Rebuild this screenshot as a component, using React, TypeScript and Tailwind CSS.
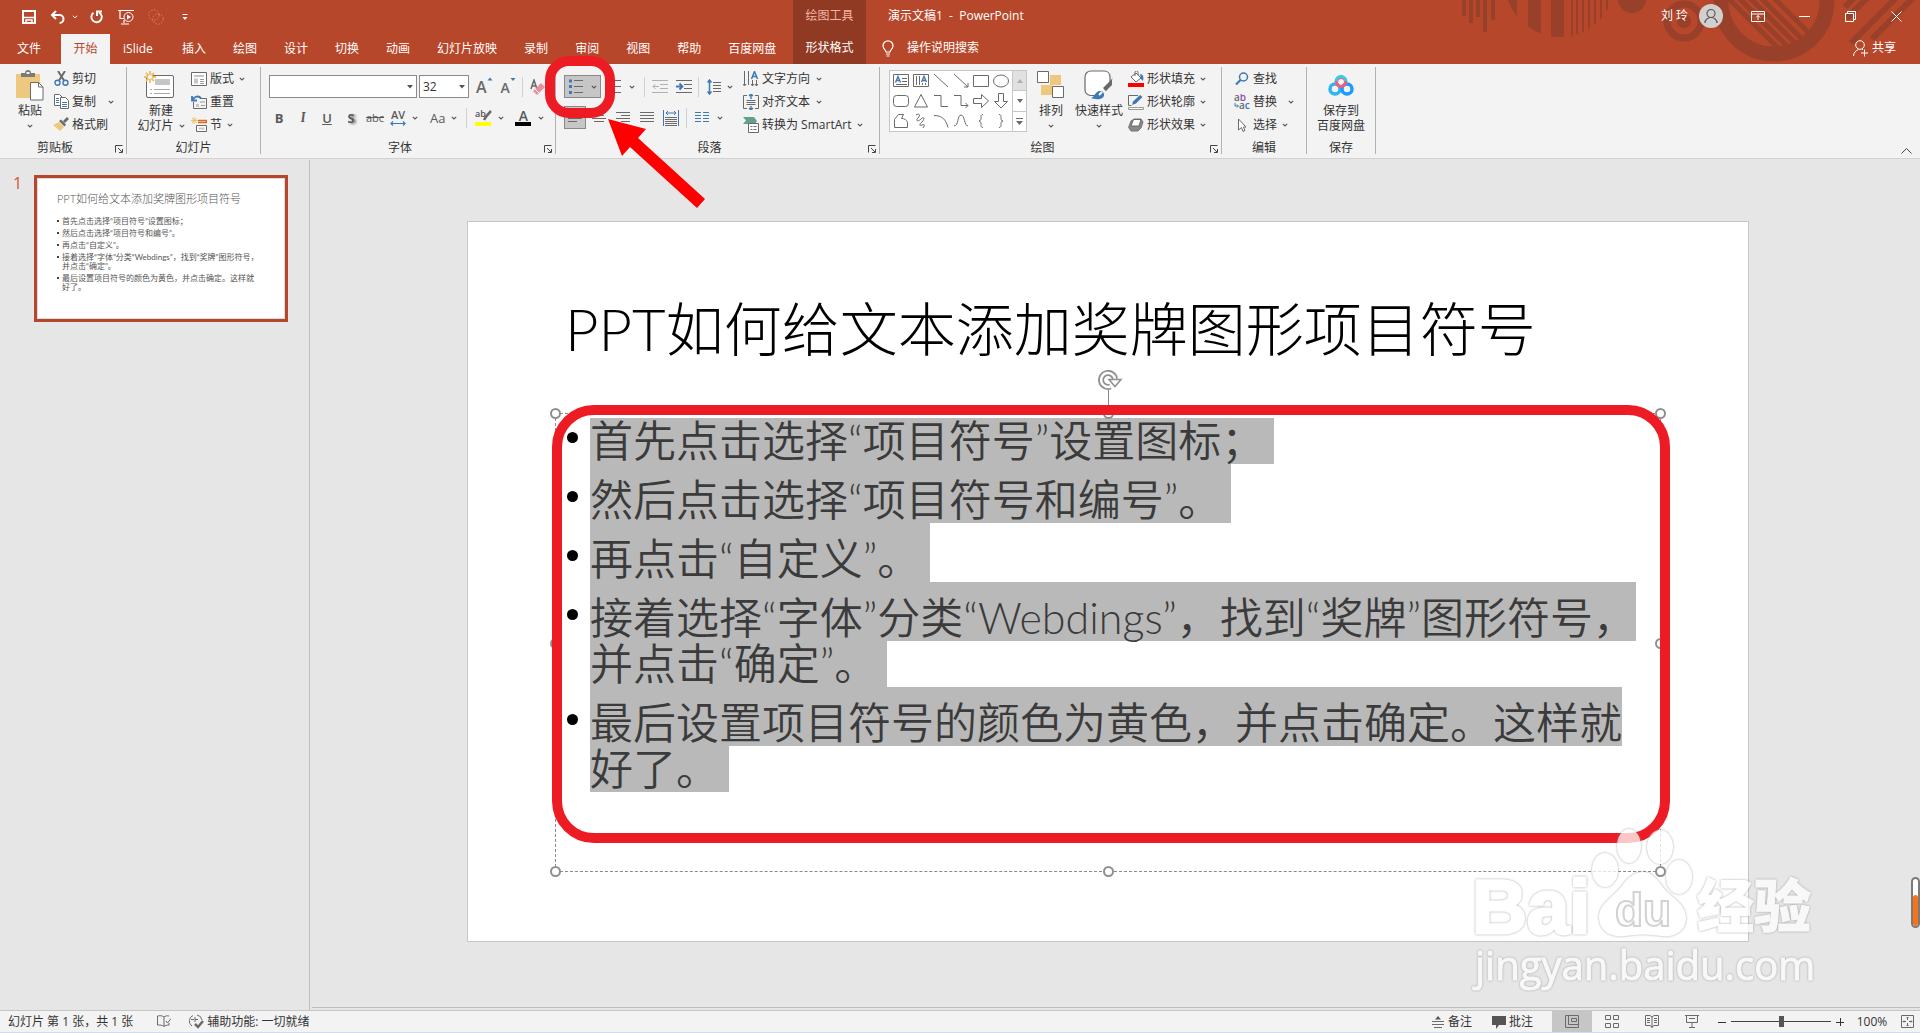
import React, { useState } from 'react';

const TABS = ['插入', '绘图', '设计', '切换', '动画', '幻灯片放映', '录制', '审阅', '视图', '帮助', '百度网盘'];

const TITLE = 'PPT如何给文本添加奖牌图形项目符号';

const PARAGRAPHS = [
    ['首先点击选择“项目符号”设置图标；'],
    ['然后点击选择“项目符号和编号”。'],
    ['再点击“自定义”。'],
    ['接着选择“字体”分类“Webdings”，找到“奖牌”图形符号，', '并点击“确定”。'],
    ['最后设置项目符号的颜色为黄色，并点击确定。这样就', '好了。'],
];

type IconProps = { w?: number; h?: number; children: React.ReactNode; className?: string };

function Icon({ w = 16, h = 16, children, className = '' }: IconProps) {
    return (
        <svg width={w} height={h} viewBox={`0 0 ${w} ${h}`} fill="none" stroke="#6a6a6a" className={`shrink-0 ${className}`} aria-hidden="true">
            {children}
        </svg>
    );
}

function Chevron({ className = '' }: { className?: string }) {
    return (
        <Icon w={6} h={4} className={className}>
            <path d="M.8.8 3 3 5.2.8" stroke="#555" strokeWidth="1.1" />
        </Icon>
    );
}

function Launcher() {
    return (
        <button aria-label="更多选项" className="absolute bottom-[1px] right-[3px] flex">
            <Icon w={8} h={8}>
                <path d="M.5 7.5V.5H7.5M3 3l4 4M7.5 4v3.5H4" stroke="#444" />
            </Icon>
        </button>
    );
}

function Group({ label, className, launcher, children }: { label: string; className: string; launcher?: boolean; children: React.ReactNode }) {
    return (
        <section aria-label={label} className={`relative flex shrink-0 flex-col border-r border-[#b1b1b1] ${className}`}>
            <div className="flex h-[71px] shrink-0">{children}</div>
            <div className={`shrink-0 text-center leading-5 ${launcher ? 'pr-4' : ''}`}>{label}</div>
            {launcher && <Launcher />}
        </section>
    );
}

function SmallButton({ icon, label, arrow, gap = 'gap-1' }: { icon: React.ReactNode; label: string; arrow?: boolean; gap?: string }) {
    return (
        <button className="flex h-[23px] items-center gap-[3px] whitespace-nowrap">
            <span className="flex w-4 shrink-0 justify-center">{icon}</span>
            <span className={`flex items-center ${gap}`}>
                {label}
                {arrow && <Chevron className="ml-[1px]" />}
            </span>
        </button>
    );
}

function BigButton({ icon, lines, arrow, inline, className = '' }: { icon: React.ReactNode; lines: string[]; arrow?: boolean; inline?: boolean; className?: string }) {
    return (
        <button className={`flex flex-col items-center whitespace-nowrap leading-[15px] ${className}`}>
            <span className="flex h-9 items-center justify-center">{icon}</span>
            {lines.map((l, i) => (
                <span key={l} className="flex items-center gap-[5px]">
                    {l}
                    {inline && i === lines.length - 1 && <Chevron />}
                </span>
            ))}
            {arrow && <Chevron className="mt-[6px]" />}
        </button>
    );
}

function Sep() {
    return <span className="h-5 w-px shrink-0 bg-[#d0d0d0]" />;
}

function Lines({ rows, w = 14 }: { rows: [number, number][]; w?: number }) {
    return (
        <Icon w={w} h={11}>
            {rows.map(([a, b], i) => (
                <path key={i} d={`M${a} ${i * 3 + 1 - 0.5}H${b}`} />
            ))}
        </Icon>
    );
}

function HeaderArt() {
    return (
        <svg width="470" height="64" viewBox="1450 0 470 64" className="absolute right-0 top-0" fill="#98402a" aria-hidden="true">
            <defs>
                <clipPath id="disc"><circle cx="1560" cy="-18" r="55" /></clipPath>
                <clipPath id="ring"><circle cx="1774" cy="1" r="48" /></clipPath>
            </defs>
            <path d="M1462 0h4v16h-4zM1469 0h4v23h-4zM1476 0h4v17h-4zM1483 0h4v32h-4zM1491 0h4v20h-4z" />
            <path clipPath="url(#disc)" d="M1505 0h12v40h-12zM1528 0h13v40h-13zM1551 0h13v40h-13zM1571 0h2v40h-2zM1576 0h2v40h-2zM1582 0h2v40h-2zM1588 0h2v40h-2zM1594 0h2v40h-2zM1600 0h2v40h-2zM1606 0h2v40h-2z" />
            <circle cx="1632" cy="-1" r="14" />
            <circle cx="1684" cy="21" r="17" fill="none" stroke="#98402a" strokeWidth="7" />
            <circle cx="1684" cy="21" r="7" />
            <circle cx="1774" cy="1" r="53" fill="none" stroke="#98402a" strokeWidth="15" />
            <path clipPath="url(#ring)" d="M1722 -8l60 60M1733 -8l60 60M1744 -8l60 60M1755 -8l60 60M1768 -8l60 60" stroke="#98402a" strokeWidth="5" />
            <path d="M1845 7l9-9M1847 18l22-22M1851 43l45-45M1872 39l41-41" stroke="#98402a" strokeWidth="6" />
        </svg>
    );
}

function Header() {
    return (
        <header className="relative flex h-16 bg-[#b7472a] text-white">
            <HeaderArt />
            <div className="flex w-[793px] shrink-0 flex-col">
                <div className="flex h-[34px] items-center pl-[22px]">
                    <button aria-label="保存"><Icon w={14} h={14}><path d="M1 1h12v12H1z" stroke="#fff" strokeWidth="2" /><path d="M1 7.5h12M4 13v-3h6v3" stroke="#fff" strokeWidth="1.5" /></Icon></button>
                    <button aria-label="撤消" className="ml-[14px]"><Icon w={16} h={14}><path d="M2 5h7.5a4 4 0 0 1 0 8M6 1 2 5l4 4" stroke="#fff" strokeWidth="2" /></Icon></button>
                    <Icon w={6} h={4} className="ml-[6px]"><path d="m.8.8 2.2 2 2.2-2" stroke="#fff" /></Icon>
                    <button aria-label="重复" className="ml-[11px]"><Icon w={14} h={14}><path d="M4.5 2.8A5.2 5.2 0 1 0 10 2.4M8 6V1.5h5" stroke="#fff" strokeWidth="1.9" /></Icon></button>
                    <button aria-label="从头开始" className="ml-[15px]"><Icon w={17} h={16}><path d="M0 1.5h16M2 2v7.500h4M6 11v3M3 15h8" stroke="#fff" strokeWidth="1.2" /><circle cx="10.500" cy="8" r="4.500" stroke="#fff" /><path d="m9 5.500 4 2.500-4 2.500z" fill="#fff" stroke="none" /></Icon></button>
                    <button aria-label="合并形状" className="ml-[13px]"><Icon w={16} h={16}><circle cx="6" cy="6" r="5.2" stroke="#d9806a" strokeDasharray="1.500 1.500" /><circle cx="10" cy="10" r="5.2" stroke="#d9806a" strokeDasharray="1.500 1.500" /></Icon></button>
                    <button aria-label="自定义快速访问工具栏" className="ml-[18px]"><Icon w={6} h={8}><path d="M.5 1.500h5" stroke="#fff" /><path d="M.5 4h5L3 7z" fill="#fff" stroke="none" /></Icon></button>
                </div>
                <nav className="flex h-[30px] items-stretch whitespace-nowrap pb-[1px]">
                    <button className="pl-[17px] pr-5">文件</button>
                    <button className="-mb-px w-[49px] bg-[#f3f3f3] pb-[1px] text-[#b7472a]">开始</button>
                    <button className="w-[59px] text-left pl-[13px]">iSlide</button>
                    {TABS.map((t) => (
                        <button key={t} className="pl-[13px] pr-[14px]">{t}</button>
                    ))}
                </nav>
            </div>
            <div className="flex w-[73px] shrink-0 flex-col bg-[#903923]">
                <span className="flex h-8 items-center justify-center text-[#f3b5a3]">绘图工具</span>
                <button className="h-[31px]">形状格式</button>
            </div>
            <div className="relative flex flex-1 flex-col">
                <div className="flex h-8 items-center pl-[22px]">
                    <span className="whitespace-pre">演示文稿1  -  PowerPoint</span>
                    <div className="ml-auto flex items-center pr-[18px]">
                        <button className="flex items-center gap-[11px]">
                            刘 玲
                            <Icon w={24} h={24}>
                                <circle cx="12" cy="12" r="12" fill="#d2d0ce" stroke="none" />
                                <circle cx="12" cy="9.500" r="4" stroke="#555" strokeWidth="1.2" />
                                <path d="M6 19c0-3.500 3-5.500 6-5.500s6 2 6 5.500" stroke="#555" strokeWidth="1.2" />
                            </Icon>
                        </button>
                        <button aria-label="功能区显示选项" className="ml-7"><Icon w={14} h={11}><path d="M.5.5h13v10H.5zM.5 3h13M7 9V4.500M5 6.500l2-2 2 2" stroke="#fff" /></Icon></button>
                        <button aria-label="最小化" className="ml-[34px]"><Icon w={11} h={11}><path d="M0 5.500h11" stroke="#fff" /></Icon></button>
                        <button aria-label="向下还原" className="ml-[35px]"><Icon w={11} h={11}><path d="M.5 2.500h8v8h-8zM2.500 2.500v-2h8v8h-2" stroke="#fff" /></Icon></button>
                        <button aria-label="关闭" className="ml-[35px]"><Icon w={11} h={11}><path d="m.5.5 10 10m0-10-10 10" stroke="#fff" /></Icon></button>
                    </div>
                </div>
                <div className="flex h-8 items-center pl-4">
                    <button className="flex items-center gap-[13px]">
                        <Icon w={12} h={17}><path d="M4 12c0-2-3-3-3-6.200a5 5 0 0 1 10 0C11 9 8 10 8 12zM4 14h4M4.500 16h3" stroke="#fff" strokeWidth="1.200" /></Icon>
                        操作说明搜索
                    </button>
                    <button className="ml-auto mr-6 flex items-center gap-[3px]">
                        <Icon w={16} h={17}><circle cx="7" cy="5" r="4.300" stroke="#fff" /><path d="M.5 16c0-3.500 2.500-5.500 5-6.500M9 9l1 1M11.500 9.500v7M8 13h7" stroke="#fff" /></Icon>
                        共享
                    </button>
                </div>
            </div>
        </header>
    );
}

function ClipboardGroup() {
    return (
        <Group label="剪贴板" className="w-[127px]" launcher>
            <BigButton
                className="ml-4 w-7"
                lines={['粘贴']}
                arrow
                icon={
                    <Icon w={28} h={31}>
                        <path d="M0 4h24v24H0z" fill="#edc87e" stroke="none" />
                        <path d="M5 7V3h4a3 3 0 0 1 6 0h4v4z" fill="#7a7a7a" stroke="none" />
                        <path d="M10.500 3h3" stroke="#f3f3f3" strokeWidth="2" />
                        <path d="M14.500 12.500h8l4.500 4.500v13H14.500z" fill="#fff" />
                        <path d="M22.500 12.500V17H27" />
                    </Icon>
                }
            />
            <div className="ml-[9px] flex flex-col">
                <SmallButton label="剪切" icon={<Icon w={15} h={15}><path d="m4 0 6 9.500M11 0 5 9.500" stroke="#6a6a6a" strokeWidth="2" /><circle cx="3.500" cy="11.800" r="2.500" stroke="#3e78b5" strokeWidth="1.400" /><circle cx="11.500" cy="11.800" r="2.500" stroke="#3e78b5" strokeWidth="1.400" /></Icon>} />
                <SmallButton label="复制" arrow gap="gap-[11px]" icon={<Icon w={15} h={15}><path d="M.5.500h5l3 3v8h-8z" fill="#fff" /><path d="M2 4.500h3M2 6.500h3M2 8.500h3" stroke="#3e78b5" /><path d="M6.500 3.500h5l3 3v8h-8z" fill="#fff" /><path d="M8 8.500h5M8 10.500h5M8 12.500h5" stroke="#3e78b5" /></Icon>} />
                <SmallButton label="格式刷" icon={<Icon w={16} h={15}><path d="M0 8 6 5l5 5-4 4z" fill="#edc87e" stroke="none" /><path d="m6 4 2-1.500 5 5L11.500 9.500zM10 4l4-4 2 2-4 4z" fill="#6a6a6a" stroke="none" /></Icon>} />
            </div>
        </Group>
    );
}

function SlidesGroup() {
    return (
        <Group label="幻灯片" className="w-[134px]">
            <BigButton
                className="ml-[11px] w-[46px]"
                lines={['新建', '幻灯片']}
                inline
                icon={
                    <Icon w={30} h={28} className="-ml-1">
                        <rect x="2.500" y="4.500" width="27" height="22" rx="1.500" fill="#fff" />
                        <path d="M11 8h15v6H11z" fill="#c6c6c6" stroke="none" />
                        <path d="M6 18.500h2M10 18.500h16M6 22.500h2M10 22.500h16" stroke="#a8a8a8" />
                        <path d="M6 0v12M0 6h12M2 2l8 8M10 2l-8 8" stroke="#edc063" strokeWidth="1.800" />
                        <circle cx="6" cy="6" r="2" fill="#fff" stroke="none" />
                    </Icon>
                }
            />
            <div className="ml-[7px] flex flex-col">
                <SmallButton label="版式" arrow icon={<Icon w={16} h={14}><path d="M.5.500h15v13H.5z" fill="#fff" /><path d="M3 3h10v2H3zM3 6.500h4v5H3z" fill="#c6c6c6" stroke="none" /><path d="M9 7.500h4M9 9.500h4M9 11.500h4" stroke="#999" /></Icon>} />
                <SmallButton label="重置" icon={<Icon w={16} h={14}><path d="M2.500 7v6.500h13v-10H9" /><path d="M9 6h5v2H9zM5 9h3v3H5z" fill="#c6c6c6" stroke="none" /><path d="M10 10.500h4" stroke="#999" /><path d="M1 1v4.500h5M1.500 5C3 1.500 8 0 10 3.500" stroke="#3e78b5" strokeWidth="1.800" /></Icon>} />
                <SmallButton label="节" arrow icon={<Icon w={16} h={16}><path d="M3 0v7M0 3.500h6.500M.8 1l5 5M5.800 1l-5 5" stroke="#edc063" /><path d="M7 3.500h8.500v2H7" stroke="#dd6b20" strokeWidth="1.500" /><path d="M5.500 8.500h10v6h-10z" fill="#fff" /><path d="M7.500 10.500h6v2h-6z" fill="#c6c6c6" stroke="none" /></Icon>} />
            </div>
        </Group>
    );
}

function FontGroup() {
    const [size, setSize] = useState('32');
    return (
        <Group label="字体" className="w-[295px]" launcher>
            <div className="flex flex-col pl-2">
                <div className="mt-2 flex h-[23px] items-center">
                    <div className="relative flex">
                        <select aria-label="字体名称" className="h-[23px] w-[148px] appearance-none border border-[#8a8a8a] bg-white"></select>
                        <Icon w={6} h={4} className="pointer-events-none absolute right-1 top-[10px]"><path d="M0 0h6L3 3.500z" fill="#555" stroke="none" /></Icon>
                    </div>
                    <div className="relative ml-[2px] flex">
                        <select aria-label="字号" value={size} onChange={(e) => setSize(e.target.value)} className="h-[23px] w-[50px] appearance-none border border-[#8a8a8a] bg-white pl-[3px]">
                            <option>28</option>
                            <option>32</option>
                            <option>36</option>
                        </select>
                        <Icon w={6} h={4} className="pointer-events-none absolute right-1 top-[10px]"><path d="M0 0h6L3 3.500z" fill="#555" stroke="none" /></Icon>
                    </div>
                    <button className="ml-[7px] flex text-base font-semibold leading-5 text-[#6a6a6a]">A<Icon w={6} h={4}><path d="M.5 3.500h5L3 .5z" fill="#3e78b5" stroke="none" /></Icon></button>
                    <button className="ml-2 flex pt-[2px] text-sm font-semibold leading-5 text-[#6a6a6a]">A<Icon w={6} h={4}><path d="M.5 0h5L3 3z" fill="#3e78b5" stroke="none" /></Icon></button>
                    <span className="ml-[6px] flex"><Sep /></span>
                    <button aria-label="清除所有格式" className="ml-[7px]">
                        <Icon w={15} h={16}><path d="m1 10 3-9 3 9M2 7h4" strokeWidth="1.500" /><path d="m3 12 8-8 4 4-8 8z" fill="#e8909c" stroke="none" /><path d="m5 10 4 4" stroke="#fff" /></Icon>
                    </button>
                </div>
                <div className="mt-2 flex h-[23px] items-center font-semibold leading-4 text-[#5a5a5a]">
                    <button className="w-5 text-[13px] font-bold">B</button>
                    <button className="ml-1 w-5 font-serif text-[13px] italic">I</button>
                    <button className="ml-1 w-5 text-[13px] underline">U</button>
                    <button className="ml-1 w-5 text-[13px] font-bold drop-shadow-[2px_1px_1px_#777]">S</button>
                    <button className="ml-1 w-5 text-[11px] font-normal line-through">abc</button>
                    <button className="ml-[3px] flex w-5 flex-col items-center text-[11px] leading-3">
                        AV
                        <Icon w={16} h={5}><path d="M1 2.500h14M3 .5l-2 2 2 2M13 .5l2 2-2 2" stroke="#3e78b5" strokeWidth="1.200" /></Icon>
                    </button>
                    <Chevron className="ml-1" />
                    <button className="ml-3 text-[13px] font-normal">Aa</button>
                    <Chevron className="ml-[6px]" />
                    <span className="ml-[9px] flex"><Sep /></span>
                    <button className="ml-2 flex h-[17px] w-4 flex-col text-[10px] leading-3" aria-label="突出显示颜色">
                        <Icon w={17} h={17}>
                            <path d="M0 13h16v4H0z" fill="#ff0" stroke="none" />
                            <path d="M9 11c2-4 4-6 7-9" strokeWidth="2.500" />
                            <text x="0" y="8" fontSize="9" fill="#555" stroke="none">ab</text>
                        </Icon>
                    </button>
                    <Chevron className="ml-[7px]" />
                    <button className="ml-[11px] flex flex-col items-center text-sm leading-[13px]">
                        A
                        <span className="h-1 w-4 bg-black" />
                    </button>
                    <Chevron className="ml-[7px]" />
                </div>
            </div>
        </Group>
    );
}

function ParagraphGroup() {
    return (
        <Group label="段落" className="w-[324px]" launcher>
            <div className="flex w-[187px] flex-col pl-2">
                <div className="mt-2 flex h-[23px] items-center">
                    <button aria-label="项目符号" className="flex h-[23px] w-[37px] items-center justify-center gap-2 border border-[#8a8a8a] bg-[#c6c6c6]">
                        <Icon w={14} h={15}><path d="M5 1.500h9M5 7.500h9M5 13.500h9" /><path d="M0 .5h3v3H0zM0 6h3v3H0zM0 12h3v3H0z" fill="#3e78b5" stroke="none" /></Icon>
                        <Chevron />
                    </button>
                    <button aria-label="编号" className="ml-1"><Icon w={16} h={13}><path d="M6 .5h10M6 6.500h10M6 12.500h10" /></Icon></button>
                    <Chevron className="ml-2" />
                    <span className="ml-[9px] flex"><Sep /></span>
                    <button aria-label="减少缩进" className="ml-[7px]"><Icon w={16} h={13}><path d="M0 .5h16M8 4.500h8M8 8.500h8M0 12.500h16M1 6.500h6M3.500 4 1 6.500 3.500 9" stroke="#b0b0b0" /></Icon></button>
                    <button aria-label="增加缩进" className="ml-2"><Icon w={16} h={13}><path d="M0 .5h16M8 4.500h8M8 8.500h8M0 12.500h16" /><path d="M0 6.500h6M3.500 3.500l3 3-3 3" stroke="#3e78b5" strokeWidth="1.800" /></Icon></button>
                    <span className="ml-[6px] flex"><Sep /></span>
                    <button aria-label="行距" className="ml-2"><Icon w={14} h={16}><path d="M6 3.500h8M6 6.500h8M6 9.500h8M6 12.500h8" /><path d="M2.500 1v14M.5 3.500l2-2.500 2 2.500M.5 12.500l2 2.500 2-2.500" stroke="#3e78b5" strokeWidth="1.500" /></Icon></button>
                    <Chevron className="ml-[6px]" />
                </div>
                <div className="mt-2 flex h-[23px] items-center">
                    <button aria-label="左对齐" className="flex h-[23px] w-[22px] items-center justify-center border border-[#8a8a8a] bg-[#c6c6c6]"><Lines rows={[[0, 14], [0, 9], [0, 14], [0, 9]]} /></button>
                    <button aria-label="居中" className="ml-[6px]"><Lines rows={[[0, 14], [2, 12], [0, 14], [2, 12]]} /></button>
                    <button aria-label="右对齐" className="ml-[10px]"><Lines rows={[[0, 14], [5, 14], [0, 14], [5, 14]]} /></button>
                    <button aria-label="两端对齐" className="ml-[10px]"><Lines rows={[[0, 14], [0, 14], [0, 14], [0, 14]]} /></button>
                    <button aria-label="分散对齐" className="ml-[9px]"><Icon w={16} h={16}><path d="M.5 0v16M15.500 0v16M3 3h10M5 1 3 3l2 2M11 1l2 2-2 2" stroke="#3e78b5" /><path d="M2 7.500h12M2 9.500h12M2 11.500h12M2 13.500h12M2 15.500h12" /></Icon></button>
                    <span className="ml-[7px] flex"><Sep /></span>
                    <button aria-label="分栏" className="ml-2"><Icon w={14} h={11}><path d="M0 .5h6M0 3.500h6M0 6.500h6M0 9.500h6M8 .5h6M8 3.500h6M8 6.500h6M8 9.500h6" stroke="#3e78b5" /></Icon></button>
                    <Chevron className="ml-2" />
                </div>
            </div>
            <div className="flex flex-col">
                <SmallButton label="文字方向" arrow gap="gap-[5px]" icon={<Icon w={16} h={16}><path d="M1.500 0v14M5.500 0v14M9.500 9v6M13.500 9v6M0 13l1.500 2L3 13M8 13l1.500 2L11 13M12 13l1.500 2 1.500-2" /><path d="m8.500 8 3-7.500 3 7.500M9.500 5.500h4" stroke="#3e78b5" strokeWidth="1.500" /></Icon>} />
                <SmallButton label="对齐文本" arrow gap="gap-[5px]" icon={<Icon w={16} h={16}><path d="M4 1.500H.5v13H4M12 1.500h3.500v13H12M3.500 6.500h9M3.500 8.500h9M3.500 10.500h9" /><path d="M8 0v5M6 2l2-2 2 2M8 16v-4M6 14l2 2 2-2" stroke="#3e78b5" strokeWidth="1.400" /></Icon>} />
                <SmallButton label="转换为 SmartArt" arrow gap="gap-[5px]" icon={<Icon w={16} h={16}><path d="M0 0h11l3 4-2 3H0l3-3.500z" fill="#62a08c" stroke="none" /><path d="M5.500 6.500h10v9h-10z" fill="#fff" /><path d="M7.500 9.500h2M10.500 9.500h3M7.500 12.500h2M10.500 12.500h3" /></Icon>} />
            </div>
        </Group>
    );
}

function ShapeGallery() {
    const shapes: React.ReactNode[] = [
        <><path d="M.5 1.500h15v12H.5z" /><path d="M9 5.500h5M9 8.500h5M3 11.500h11" /><path d="m2.500 9.500 2.500-6 2.500 6M3.500 7.500h3" stroke="#3e78b5" strokeWidth="1.400" /></>,
        <><path d="M.5 1.500h15v12H.5zM3.500 3v9M6.500 3v9M9.500 10v2M12.500 10v2" /><path d="m8.500 9 2.500-5.500L13.500 9M9.500 7.500h3" stroke="#3e78b5" strokeWidth="1.400" /></>,
        <path d="m1 1 14 13" />,
        <path d="m1 1 14 13M15 10v4h-4" />,
        <path d="M.5 2.500h15v11H.5z" />,
        <ellipse cx="8" cy="8" rx="7.500" ry="6" />,
        <rect x=".5" y="2.500" width="15" height="11" rx="3" />,
        <path d="M8 1.500 14.500 14h-13z" />,
        <path d="M1 2.500h7v11h7" />,
        <path d="M1 2.500h7v10h7M12.500 10l2.500 2.500-2.500 2.500" />,
        <path d="M.5 5.500h8v-4l7 6.500-7 6.500v-4h-8z" />,
        <path d="M5.500.5v8h-4L8 15l6.500-6.500h-4v-8z" />,
        <path d="M1.500 14.500V6.500l4-5h5l-2 4c3 0 5 1 6 4v5z" />,
        <path d="M3 2c3-2 5 0 2 3S5 9 8 6s4 0 1 3-3 4 0 3 3 0 1 3" />,
        <path d="M1 2.500c8 0 12 4 14 12" />,
        <path d="M1 13c5 0 3-11 7-11s3 11 7 11" />,
        <path d="M10 1.500c-4 0 0 6-4 6.500 4 .5 0 6.500 4 6.500" />,
        <path d="M6 1.500c4 0 0 6 4 6.500-4 .5 0 6.500-4 6.500" />,
    ];
    return (
        <div className="ml-[9px] mt-[3px] flex h-[62px] border border-[#c6c6c6] bg-white">
            <div className="grid w-[122px] grid-cols-6 place-items-center px-[1px]">
                {shapes.map((s, i) => (
                    <button key={i} aria-label={`形状 ${i + 1}`}><Icon>{s}</Icon></button>
                ))}
            </div>
            <div className="flex w-[14px] flex-col divide-y divide-[#c6c6c6] border-l border-[#c6c6c6]">
                <button aria-label="上一行" className="flex flex-1 items-center justify-center bg-[#e1e1e1]"><Icon w={6} h={4}><path d="M0 4h6L3 0z" fill="#b0b0b0" stroke="none" /></Icon></button>
                <button aria-label="下一行" className="flex flex-1 items-center justify-center"><Icon w={6} h={4}><path d="M0 0h6L3 4z" fill="#6a6a6a" stroke="none" /></Icon></button>
                <button aria-label="其他" className="flex flex-1 items-center justify-center"><Icon w={7} h={7}><path d="M0 .5h7" /><path d="M0 3h7L3.500 7z" fill="#6a6a6a" stroke="none" /></Icon></button>
            </div>
        </div>
    );
}

function DrawingGroup() {
    return (
        <Group label="绘图" className="w-[342px]" launcher>
            <ShapeGallery />
            <BigButton
                className="ml-[10px] w-7"
                lines={['排列']}
                arrow
                icon={<Icon w={28} h={28}><path d="M13 4h11v10H13zM4 14h11v10H4z" fill="#edc87e" stroke="none" /><path d="M.5.500h11v11H.5zM15.500 15.500h11v11h-11z" fill="#fff" /></Icon>}
            />
            <BigButton
                className="ml-[9px] w-[50px]"
                lines={['快速样式']}
                arrow
                icon={<Icon w={30} h={30}><path d="M12 25.500H7c-4 0-6-3-6-6V7c0-4 3-6 6-6h13c4 0 6 3 6 6v6" fill="#fff" strokeWidth="1.200" /><path d="m29 8-7 13-3-3z" fill="#6a6a6a" stroke="none" /><path d="M28 9v6l-6 6-2-2z" fill="#6a6a6a" stroke="none" /><path d="M7 28c4-1 4-7 9-7s6 7 0 8c-3 .5-7 0-9-1z" fill="#3e78b5" stroke="none" /><path d="m15 25 3-3" stroke="#fff" strokeWidth="2" /></Icon>}
            />
            <div className="ml-1 flex flex-col">
                <SmallButton label="形状填充" arrow icon={<Icon w={16} h={16}><path d="M0 12h16v4H0z" fill="#f00" stroke="none" /><path d="m3 6 5-4 5 5-5 4zM7 5V1.500a1.500 1.500 0 0 1 3 0V4" fill="#fff" /><path d="M12 3c3 0 4 3 3 7l-2-2z" fill="#3e78b5" stroke="none" /></Icon>} />
                <SmallButton label="形状轮廓" arrow icon={<Icon w={16} h={16}><path d="M10 1.500H.5v10h3" /><path d="m4 11 1-3.500L12 1l2.500 2L8 9.500z" fill="#3e78b5" stroke="none" /><path d="M.5 13.500h15v2H.5z" stroke="#999" fill="#fff" /></Icon>} />
                <SmallButton label="形状效果" arrow icon={<Icon w={16} h={14}><path d="M6 1h7l2 3-2 6-3 3H3L.5 9.500 3 3z" fill="#888" stroke="#777" /><path d="M5.500 1.500h7.500l-2 6.500H3z" fill="#fff" /></Icon>} />
            </div>
        </Group>
    );
}

function Ribbon() {
    return (
        <div className="relative flex h-[95px] border-b border-[#d2d2d2] bg-[#f3f3f3] pb-1 pt-[3px] text-[#333]">
            <ClipboardGroup />
            <SlidesGroup />
            <FontGroup />
            <ParagraphGroup />
            <DrawingGroup />
            <Group label="编辑" className="w-[85px]">
                <div className="ml-3 flex flex-col">
                    <SmallButton label="查找" icon={<Icon w={14} h={14}><circle cx="8.500" cy="5" r="4" stroke="#3e78b5" strokeWidth="1.500" /><path d="M5.500 8 1 12.500" stroke="#3e78b5" strokeWidth="2.200" /></Icon>} />
                    <SmallButton label="替换" arrow gap="gap-[10px]" icon={<Icon w={16} h={16}><g stroke="none" fontSize="10" fontWeight="600"><text x="0" y="7" fill="#6a6a6a">a<tspan fill="#8a4fb0">b</tspan></text><text x="5" y="15" fill="#6a6a6a">a<tspan fill="#3e78b5">c</tspan></text></g><path d="M1 9v3h3M3 10.500 4.500 12 3 13.500" stroke="#3e78b5" /></Icon>} />
                    <SmallButton label="选择" arrow icon={<Icon w={10} h={14}><path d="M1.500 1v11l3-2.500 1.500 4 2-1-1.500-3.500H9z" fill="#fff" /></Icon>} />
                </div>
            </Group>
            <Group label="保存" className="w-[69px]">
                <BigButton
                    className="w-full"
                    lines={['保存到', '百度网盘']}
                    icon={<Icon w={26} h={22}><circle cx="7" cy="15" r="5" stroke="#2fb4f0" strokeWidth="3.500" /><circle cx="19" cy="15" r="5" stroke="#1a9bff" strokeWidth="3.500" /><path d="M8 8a5 5 0 0 1 10 0" stroke="#3cc8e8" strokeWidth="3.500" /><circle cx="13" cy="8" r="4.500" stroke="#fb5b70" strokeWidth="3" /><path d="M8.500 7a4.500 4.500 0 0 1 9 0" stroke="#3cc8e8" strokeWidth="3" /></Icon>}
                />
            </Group>
            <button aria-label="折叠功能区" className="absolute bottom-1 right-2"><Icon w={11} h={6}><path d="m.5 5.500 5-5 5 5" stroke="#444" /></Icon></button>
        </div>
    );
}

function ThumbnailPane() {
    return (
        <aside className="flex w-[310px] shrink-0 border-r border-[#bdbdbd] pt-[15px]">
            <span className="w-[34px] shrink-0 pl-[13px] text-base leading-4 text-[#d2553a]">1</span>
            <button aria-label="幻灯片 1" className="flex h-[147px] w-[254px] flex-col items-start justify-start border-[3px] border-[#b7472a] bg-white pl-[20px] pt-[13px] text-left font-['Lato','Noto_Sans_CJK_SC',sans-serif] text-[#555] outline outline-1 -outline-offset-4 outline-[#d8dbe4]">
                <span className="block whitespace-nowrap text-[11px] font-light leading-4">{TITLE}</span>
                <span className="mt-[10px] block text-[8px] leading-[9px]">
                    {PARAGRAPHS.map((p) => (
                        <span key={p[0]} className="mb-[3px] flex gap-[3px] whitespace-nowrap">
                            <span className="mt-[3px] size-[2px] rounded-full bg-black" />
                            <span>
                                {p.map((line) => <span key={line} className="block">{line}</span>)}
                            </span>
                        </span>
                    ))}
                </span>
            </button>
        </aside>
    );
}

const HANDLES = [
    '-left-[6px] -top-[6px]', 'left-1/2 -ml-[5px] -top-[6px]', '-right-[6px] -top-[6px]',
    '-left-[6px] top-1/2 -mt-[5px]', '-right-[6px] top-1/2 -mt-[5px]',
    '-left-[6px] -bottom-[6px]', 'left-1/2 -ml-[5px] -bottom-[6px]', '-right-[6px] -bottom-[6px]',
];

function Slide() {
    return (
        <article className="mx-auto flex aspect-video w-full max-w-[1282px] flex-col border border-[#c6c6c6] bg-white pb-[69px] pl-[87px] pr-[87px] pt-[71px] font-['Lato','Noto_Sans_CJK_SC',sans-serif]">
            <h1 className="whitespace-nowrap pl-[10px] text-[58px] font-light leading-[72px] text-black">{TITLE}</h1>
            <div className="relative mt-12 flex-1 border border-dashed border-[#8a8a8a]">
                <ul className="pt-1 text-[43px] font-[350] leading-[46px] text-[#3b3b3b]">
                    {PARAGRAPHS.map((p, i) => (
                        <li key={p[0]} className="flex whitespace-nowrap">
                            <span className={`ml-[11px] mr-3 size-[11px] shrink-0 rounded-full bg-black ${i === 0 ? 'mt-[14px]' : 'mt-[27px]'}`} />
                            <div className="flex flex-col items-start">
                                {p.map((line, n) => (
                                    <span key={line} className={`bg-[#b9b9b9] ${n === 0 && i > 0 ? 'pt-[13px]' : ''} ${n === p.length - 1 ? 'pr-[10px]' : ''}`}>{line}</span>
                                ))}
                            </div>
                        </li>
                    ))}
                </ul>
                <span className="absolute -top-6 left-1/2 h-6 w-px bg-[#8a8a8a]" />
                {HANDLES.map((h) => (
                    <span key={h} className={`absolute size-[11px] rounded-full border-2 border-[#8f8f8f] bg-white ${h}`} />
                ))}
                <Icon w={26} h={22} className="absolute -top-[44px] left-1/2 -ml-[11px]">
                    <path d="M13.500 16.500A7 7 0 1 1 18 9" stroke="#8f8f8f" strokeWidth="6" />
                    <path d="M13.500 16.500A7 7 0 1 1 18 9" stroke="#fff" strokeWidth="2.500" />
                    <path d="M12 9.500h12l-6 7z" fill="#fff" stroke="#8f8f8f" strokeWidth="1.500" />
                </Icon>
                <div className="absolute -left-1 -right-[10px] -top-[9px] bottom-7 rounded-[42px] border-[10px] border-[#ed1c24]" />
            </div>
        </article>
    );
}

function Watermark() {
    return (
        <svg width="350" height="170" viewBox="1470 824 350 170" className="pointer-events-none absolute bottom-[14px] right-[100px] opacity-75 drop-shadow-[0_0_1px_#8a8a8a]" fill="#fff" aria-hidden="true">
            <ellipse cx="1629" cy="847" rx="12" ry="17" />
            <ellipse cx="1660" cy="848" rx="13" ry="17" />
            <ellipse cx="1605" cy="871" rx="13" ry="17" />
            <ellipse cx="1679" cy="878" rx="13" ry="17" />
            <path d="M1643 873c9 0 15 8 20 15 7 10 23 16 23 31 0 14-13 20-25 18-12-2-24-2-36 0-14 2-26-5-26-19 0-13 14-20 22-30 6-8 12-15 22-15z" />
            <g stroke="#fff">
                <text x="1472" y="934" fontSize="76" fontWeight="700" fontFamily="Liberation Sans, sans-serif" strokeWidth="3">Bai</text>
                <text x="1697" y="928" fontSize="57" fontWeight="900" fontFamily="Noto Sans CJK SC, sans-serif">经验</text>
                <text x="1475" y="981" fontSize="40" fontFamily="Open Sans, sans-serif">jingyan.baidu.com</text>
            </g>
            <text x="1643" y="927" fontSize="46" fontWeight="700" fontFamily="Liberation Sans, sans-serif" textAnchor="middle" stroke="#c4c4c4" strokeWidth="2">du</text>
        </svg>
    );
}

function StatusBar() {
    const [zoom, setZoom] = useState(50);
    return (
        <footer className="flex h-[23px] items-center border-b border-t border-b-[#cfdcec] border-t-[#c6c6c6] bg-[#f3f3f3] pl-2 text-[#333]">
            <span>幻灯片 第 1 张，共 1 张</span>
            <button aria-label="拼写检查" className="ml-6"><Icon w={14} h={13}><path d="M7 2v9M7 2C5 .5 3 .5.5 1v9c2.500 0 4.500 0 6.500 1.500 1-1 3-1.500 5-1.500V8M7 2c1-1 3-1.500 5-1M9 6l1.500 2L14 3.500" /></Icon></button>
            <button className="ml-[17px] flex items-center gap-[3px]">
                <Icon w={16} h={15}><path d="M5 1.500a6 6 0 0 0-1 10.500M9 1a6 6 0 0 1 5 5M3 5.500h3M7 3v5M10 5.500H7" /><path d="m7 10 3 3 5-6" strokeWidth="2.500" /></Icon>
                辅助功能: 一切就绪
            </button>
            <div className="ml-auto flex h-full items-center">
                <button className="flex items-center gap-1"><Icon w={12} h={12}><path d="M3 3.500 6 0l3 3.500z" fill="#555" stroke="none" /><path d="M0 5.500h12M0 8.500h12M2 11.500h8" /></Icon>备注</button>
                <button className="ml-5 flex items-center gap-[3px]"><Icon w={14} h={14}><path d="M0 1h14v9H7l-3 4v-4H0z" fill="#555" stroke="none" /></Icon>批注</button>
                <button aria-label="普通视图" className="ml-[19px] flex h-full w-10 items-center justify-center bg-[#c6c6c6]"><Icon w={14} h={13}><path d="M.5.500h13v12H.5zM3.500 0v9.500H14M6.500 3.500h5v3h-5z" /></Icon></button>
                <button aria-label="幻灯片浏览" className="flex w-10 justify-center"><Icon w={14} h={13}><path d="M.5.500h5v4h-5zM8.500.500h5v4h-5zM.5 8.500h5v4h-5zM8.500 8.500h5v4h-5z" /></Icon></button>
                <button aria-label="阅读视图" className="flex w-10 justify-center"><Icon w={14} h={13}><path d="M7 2v11M.5.500H5L7 2 9 .500h4.500v10H9L7 12l-2-1.500H.5zM2 3.500h3M2 5.500h3M2 7.500h3M9 3.500h3M9 5.500h3M9 7.500h3" /></Icon></button>
                <button aria-label="幻灯片放映" className="flex w-10 justify-center"><Icon w={14} h={13}><path d="M0 .5h14M1.500 1v6.500h11V1M4 3.500h6M7 8v4M4 12.500h6" /></Icon></button>
                <button aria-label="缩小" className="ml-[6px]"><Icon w={8} h={8}><path d="M0 4.500h8" stroke="#333" /></Icon></button>
                <input aria-label="缩放" type="range" value={zoom} onChange={(e) => setZoom(Number(e.target.value))} className="ml-[5px] h-px w-[100px] appearance-none bg-[#444] [&::-webkit-slider-thumb]:h-[11px] [&::-webkit-slider-thumb]:w-[5px] [&::-webkit-slider-thumb]:appearance-none [&::-webkit-slider-thumb]:bg-[#555]" />
                <button aria-label="放大" className="ml-[5px]"><Icon w={8} h={8}><path d="M0 4.500h8M4.500 0v8" stroke="#333" /></Icon></button>
                <button className="ml-3 w-8">100%</button>
                <button aria-label="使幻灯片适应当前窗口" className="ml-[13px] mr-[6px]"><Icon w={13} h={13}><path d="M.5.500h12v12H.5zM6.500 2v3M6.500 8v3M2 6.500h3M8 6.500h3M5.500 3l1-1 1 1M5.500 10l1 1 1-1M3 5.500l-1 1 1 1M10 5.500l1 1-1 1" /></Icon></button>
            </div>
        </footer>
    );
}

function App() {
    return (
        <div className="relative flex min-h-screen flex-col overflow-hidden bg-[#e6e6e6] font-['Open_Sans','Noto_Sans_CJK_SC',sans-serif] text-xs">
            <Header />
            <Ribbon />
            <div className="flex flex-1 pt-[1px]">
                <ThumbnailPane />
                <main className="relative mb-[2px] ml-[2px] min-w-0 flex-1 border-b border-[#bdbdbd] pl-2 pr-[24px] pt-[61px]">
                    <Slide />
                    <Watermark />
                    <div className="absolute bottom-[79px] right-0 flex h-[51px] w-[9px] items-end rounded-full border-2 border-[#7a7a7a] bg-white">
                        <div className="h-[31px] w-full rounded-full bg-[#f97316]" />
                    </div>
                </main>
            </div>
            <StatusBar />
            <div className="pointer-events-none absolute left-[545px] top-14 h-[62px] w-[70px] rounded-[24px] border-[10px] border-[#ed1c24]" />
            <svg width="100" height="92" viewBox="607 118 100 92" className="pointer-events-none absolute left-[607px] top-[118px]" aria-hidden="true">
                <path d="m608 119 38 10-8 9 67 61-8 9-67-61-8 9z" fill="#f00" />
            </svg>
        </div>
    );
}

export default App;
